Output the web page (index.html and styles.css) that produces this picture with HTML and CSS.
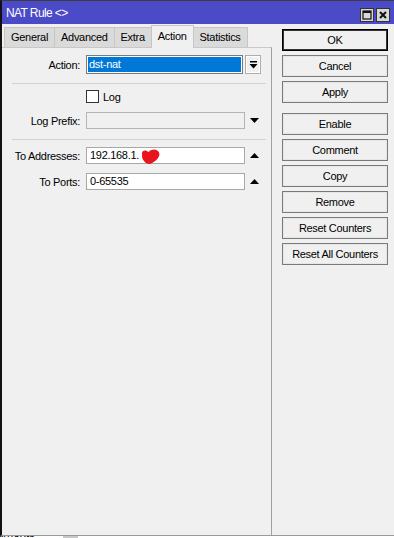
FILE: index.html
```html
<!DOCTYPE html>
<html lang="en">
<head>
    <meta charset="UTF-8">
    <title>NAT Rule</title>
    <link rel="stylesheet" href="styles.css">
</head>
<body>
    <div class="window">
        <div class="titlebar">
            <span class="title">NAT Rule &lt;&gt;</span>
            <div class="title-btns">
                <span class="tbtn">
                    <svg width="10" height="10" viewBox="0 0 10 10"><rect x="1" y="1" width="8" height="8" fill="none" stroke="#111" stroke-width="1.2"/><rect x="1" y="1" width="8" height="2" fill="#111"/></svg>
                </span>
                <span class="tbtn">
                    <svg width="10" height="10" viewBox="0 0 10 10"><path d="M2 2 L8 8 M8 2 L2 8" stroke="#111" stroke-width="2"/></svg>
                </span>
            </div>
        </div>

        <div class="body">
            <div class="main">
                <div class="tabs">
                    <div class="tab">General</div>
                    <div class="tab">Advanced</div>
                    <div class="tab">Extra</div>
                    <div class="tab active">Action</div>
                    <div class="tab">Statistics</div>
                </div>

                <div class="panel">
                    <div class="row row-action">
                        <label class="lbl">Action:</label>
                        <div class="field field-select">dst-nat</div>
                        <div class="drop-btn">
                            <svg width="9" height="8" viewBox="0 0 9 8"><rect x="1" y="0" width="7" height="1.5" fill="#000"/><path d="M0.5 3 H8.5 L4.5 7.5 Z" fill="#000"/></svg>
                        </div>
                    </div>

                    <div class="sep"></div>

                    <div class="row row-check">
                        <span class="check"></span>
                        <span>Log</span>
                    </div>

                    <div class="row row-prefix">
                        <label class="lbl">Log Prefix:</label>
                        <div class="field field-disabled"></div>
                        <svg class="arrow" width="9" height="5" viewBox="0 0 9 5"><path d="M0 0 H9 L4.5 5 Z" fill="#000"/></svg>
                    </div>

                    <div class="sep sep-wide"></div>

                    <div class="row row-addr">
                        <label class="lbl">To Addresses:</label>
                        <div class="field field-addr">
                            192.168.1.
                            <svg class="blot" width="21" height="16" viewBox="0 0 20 15"><path d="M2 5 C1 1 6 0 8 3 C10 0 16 -1 18 3 C20 7 15 12 10 14 C6 15 3 11 2 8 Z" fill="#e8141e"/></svg>
                        </div>
                        <svg class="arrow" width="9" height="5" viewBox="0 0 9 5"><path d="M0 5 H9 L4.5 0 Z" fill="#000"/></svg>
                    </div>

                    <div class="row row-ports">
                        <label class="lbl">To Ports:</label>
                        <div class="field">0-65535</div>
                        <svg class="arrow" width="9" height="5" viewBox="0 0 9 5"><path d="M0 5 H9 L4.5 0 Z" fill="#000"/></svg>
                    </div>
                </div>
            </div>

            <div class="side">
                <div class="btn btn-default">OK</div>
                <div class="btn">Cancel</div>
                <div class="btn btn-gap">Apply</div>
                <div class="btn">Enable</div>
                <div class="btn">Comment</div>
                <div class="btn">Copy</div>
                <div class="btn">Remove</div>
                <div class="btn">Reset Counters</div>
                <div class="btn">Reset All Counters</div>
            </div>
        </div>
    </div>

    <div class="behind">
        <span class="behind-text">uments</span>
        <span class="behind-thumb"></span>
    </div>
</body>
</html>
```

FILE: styles.css
```css
* {
    box-sizing: border-box;
}

body {
    margin: 0;
    width: 394px;
    height: 538px;
    overflow: hidden;
    background: #f0f0f0;
    font-family: 'Liberation Sans', Arial, sans-serif;
    font-size: 11px;
    letter-spacing: -0.3px;
    color: #000;
}

.window {
    height: 536px;
    display: flex;
    flex-direction: column;
    border-top: 1px solid #3c3c3c;
    border-left: 2px solid #111;
    border-bottom: 1px solid #9a9a9a;
    background: #f0f0f0;
}

/* title bar */
.titlebar {
    height: 23px;
    background: #4b4bc8;
    color: #fff;
    display: flex;
    align-items: center;
    justify-content: space-between;
    padding: 0 4px;
}

.title {
    font-size: 12px;
    letter-spacing: -0.6px;
}

.title-btns {
    display: flex;
    gap: 2px;
    margin-top: 5px;
}

.tbtn {
    width: 14px;
    height: 14px;
    background: #d8d8d8;
    border: 1px solid #333;
    display: flex;
    align-items: center;
    justify-content: center;
}

.body {
    flex: 1;
    display: flex;
}

/* left side with tabs */
.main {
    width: 270px;
    display: flex;
    flex-direction: column;
}

.tabs {
    height: 23px;
    display: flex;
    align-items: flex-end;
    padding-left: 2px;
}

.tab {
    height: 20px;
    line-height: 19px;
    padding: 0 6px;
    background: #dadada;
    border: 1px solid #c6c6c6;
    border-bottom: none;
    margin-right: -1px;
}

.tab.active {
    height: 23px;
    line-height: 21px;
    background: #f0f0f0;
    margin-bottom: -1px;
    position: relative;
    z-index: 1;
}

.panel {
    flex: 1;
    border-top: 1px solid #c8c8c8;
    border-right: 1px solid #a0a0a0;
    padding-top: 7px;
}

.row {
    display: flex;
    align-items: center;
}

.lbl {
    width: 78px;
    margin-right: 6px;
    text-align: right;
}

.field {
    width: 159px;
    height: 17px;
    line-height: 15px;
    border: 1px solid #a8a8a8;
    background: #fff;
    padding-left: 3px;
    white-space: nowrap;
}

.field-select {
    width: 157px;
    height: 19px;
    line-height: 15px;
    background: #0078d7;
    color: #fff;
    border: 1px solid #7a7a7a;
    box-shadow: inset 0 0 0 1px #fff;
    padding-left: 2px;
    padding-top: 1px;
}

.drop-btn {
    width: 16px;
    height: 19px;
    margin-left: 2px;
    border: 1px solid #adadad;
    box-shadow: inset 0 0 0 1px #fff;
    display: flex;
    align-items: center;
    justify-content: center;
}

.field-disabled {
    background: #f0f0f0;
    border-color: #b4b4b4;
}

.arrow {
    margin-left: 5px;
}

.sep {
    height: 1px;
    background: #d2d2d2;
    margin: 9px 5px 0 10px;
}

.sep-wide {
    margin-top: 10px;
}

.row-check {
    margin-top: 6px;
    padding-left: 84px;
}

.check {
    width: 13px;
    height: 13px;
    border: 1px solid #333;
    background: #fff;
    margin-right: 4px;
}

.row-prefix {
    margin-top: 9px;
}

.row-addr {
    margin-top: 7px;
}

.row-ports {
    margin-top: 9px;
}

.field-addr {
    position: relative;
}

.blot {
    position: absolute;
    left: 53px;
    top: 1px;
}

/* right side buttons */
.side {
    flex: 1;
    padding: 5px 0 0 10px;
}

.btn {
    width: 106px;
    height: 22px;
    line-height: 20px;
    margin-bottom: 4px;
    text-align: center;
    background: #f0f0f0;
    border: 1px solid #7a7a7a;
    box-shadow: inset 0 0 0 1px #e6e6e6;
}

.btn-default {
    border: 1px solid #000;
    box-shadow: inset 0 0 0 1px #333;
}

.btn-gap {
    margin-bottom: 10px;
}

/* window behind */
.behind {
    height: 2px;
    overflow: hidden;
    background: #fff;
    position: relative;
}

.behind-text {
    display: block;
    margin-left: -3px;
    margin-top: -9px;
    font-size: 12px;
    line-height: 12px;
}

.behind-thumb {
    position: absolute;
    left: 63px;
    top: 0;
    width: 15px;
    height: 2px;
    background: #c8c8c8;
}
```
